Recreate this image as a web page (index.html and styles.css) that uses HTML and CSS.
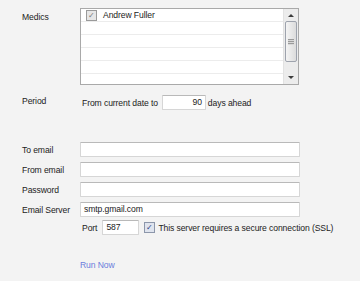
FILE: index.html
```html
<!DOCTYPE html>
<html lang="en">
<head>
    <meta charset="UTF-8">
    <title>Settings</title>
    <link rel="stylesheet" href="styles.css">
</head>
<body>
    <div class="form">
        <div class="row medics-row">
            <div class="label">Medics</div>
            <div class="listbox">
                <div class="list-rows">
                    <div class="list-item"><span class="check grey">&#10003;</span>Andrew Fuller</div>
                    <div class="list-item"></div>
                    <div class="list-item"></div>
                    <div class="list-item"></div>
                    <div class="list-item"></div>
                    <div class="list-item last"></div>
                </div>
                <div class="scrollbar">
                    <div class="arrow up"></div>
                    <div class="thumb"><div class="grip"></div></div>
                    <div class="arrow down"></div>
                </div>
            </div>
        </div>

        <div class="row period-row">
            <div class="label">Period</div>
            <div class="inline">
                <span>From current date to</span>
                <div class="input days">90</div>
                <span>days ahead</span>
            </div>
        </div>

        <div class="row email-row first">
            <div class="label">To email</div>
            <div class="input wide"></div>
        </div>
        <div class="row email-row">
            <div class="label">From email</div>
            <div class="input wide"></div>
        </div>
        <div class="row email-row">
            <div class="label">Password</div>
            <div class="input wide"></div>
        </div>
        <div class="row email-row">
            <div class="label">Email Server</div>
            <div class="input wide">smtp.gmail.com</div>
        </div>

        <div class="row port-row">
            <div class="label"></div>
            <div class="inline">
                <span>Port</span>
                <div class="input port">587</div>
                <span class="check blue">&#10003;</span>
                <span>This server requires a secure connection (SSL)</span>
            </div>
        </div>

        <div class="row run-row">
            <div class="label"></div>
            <a href="#" class="run-link">Run Now</a>
        </div>
    </div>
</body>
</html>
```

FILE: styles.css
```css
body {
    margin: 0;
    background-color: #f3f3f3;
    font-family: 'Liberation Sans', Arial, sans-serif;
    font-size: 8.6px;
    letter-spacing: -0.1px;
    color: #222222;
}

.form {
    padding: 8px 0 0 22px;
}

.row {
    display: flex;
    align-items: center;
}

.label {
    width: 58px;
    flex: none;
}

/* lista de medicos */
.medics-row {
    align-items: flex-start;
}

.medics-row .label {
    padding-top: 4px;
}

.listbox {
    width: 217px;
    height: 75px;
    border: 1px solid #a9a9a9;
    background: #ffffff;
    display: flex;
}

.list-rows {
    flex: 1;
}

.list-item {
    height: 12px;
    border-bottom: 1px solid #ececec;
    display: flex;
    align-items: center;
    padding-left: 5px;
}

.list-item.last {
    border-bottom: none;
}

.check {
    width: 9px;
    height: 9px;
    border: 1px solid #9a9a9a;
    font-size: 8px;
    line-height: 9px;
    text-align: center;
    margin-right: 6px;
    flex: none;
    letter-spacing: 0;
}

.check.grey {
    background: #e6e6e6;
    color: #7a7a7a;
}

.check.blue {
    background: #dfe4ee;
    color: #2b3f84;
    border-color: #8c96aa;
    margin-left: 5px;
    margin-right: 3px;
}

.scrollbar {
    width: 14px;
    background: #ececec;
    border-left: 1px solid #e2e2e2;
    display: flex;
    flex-direction: column;
    align-items: center;
}

.arrow {
    width: 0;
    height: 0;
    border-left: 3px solid transparent;
    border-right: 3px solid transparent;
}

.arrow.up {
    border-bottom: 3px solid #3c3c3c;
    margin: 5px 0 4px;
}

.arrow.down {
    border-top: 3px solid #3c3c3c;
    margin: auto 0 5px;
}

.thumb {
    width: 10px;
    height: 39px;
    border: 1px solid #9ea3ad;
    border-radius: 2px;
    background: linear-gradient(to right, #f4f4f4, #dcdcdc);
    display: flex;
    align-items: center;
    justify-content: center;
}

.grip {
    width: 6px;
    height: 6px;
    background: repeating-linear-gradient(to bottom, #9a9a9a 0 1px, #d8d8d8 1px 2px);
}

/* campos */
.input {
    height: 13px;
    border: 1px solid #d6d6d6;
    border-top-color: #b9b9b9;
    border-radius: 1px;
    background: #ffffff;
    padding: 0 3px;
    line-height: 13px;
    box-sizing: content-box;
}

.inline {
    display: flex;
    align-items: center;
    padding-left: 2px;
}

.period-row {
    margin-top: 10px;
}

.period-row .label {
    align-self: flex-start;
    padding-top: 1px;
}

.input.days {
    width: 36px;
    text-align: right;
    margin: 0 2px 0 4px;
}

.email-row {
    margin-top: 5px;
}

.email-row.first {
    margin-top: 32px;
}

.input.wide {
    width: 212px;
}

.port-row {
    margin-top: 3px;
}

.input.port {
    width: 29px;
    margin-left: 5px;
}

.run-row {
    margin-top: 25px;
}

.run-link {
    color: #6b7ddc;
    text-decoration: none;
}
```
